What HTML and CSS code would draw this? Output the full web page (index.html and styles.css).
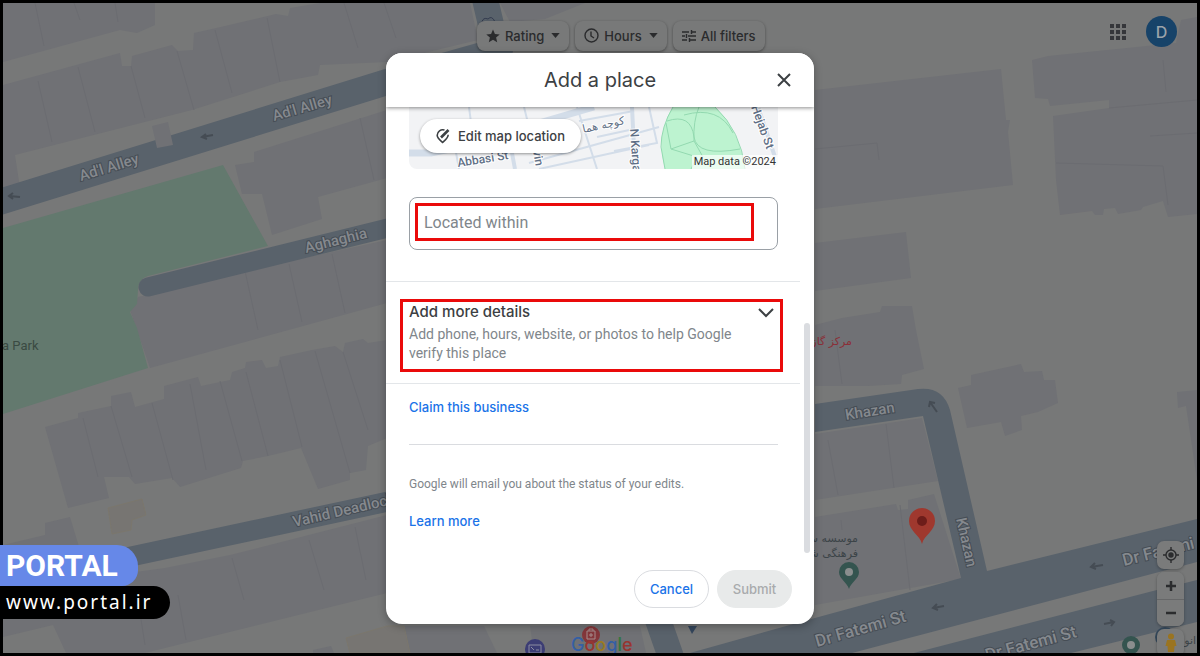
FILE: index.html
```html
<!DOCTYPE html>
<html lang="en">
<head>
    <meta charset="UTF-8">
    <meta name="viewport" content="width=device-width, initial-scale=1.0">
    <title>Add a place</title>
    <link rel="stylesheet" href="styles.css">
</head>
<body>
<div class="app">
    <svg class="map" viewBox="3 3 1194 650" preserveAspectRatio="xMidYMid slice" aria-hidden="true">
        <!-- buildings -->
        <g class="building">
            <path d="M3 3H155V25L137 33L120 30L3 62Z"/>
            <path d="M3 85L120 53L122 66H131L132 56L172 45L178 51L193 50L194 33L212 29L276 14L288 16L290 8L320 3H470L478 40L387 62L320 65L318 75L280 82L192 110L15 155L20 188L3 194Z"/>
            <path d="M235 165L254 162V152L387 110V178L318 197L322 219L272 235L262 194H242Z"/>
            <path d="M138 297L245 271L387 240V303L150 368L130 310Z"/>
            <path d="M45 427L78 418V413L111 406V396L131 392L135 407L164 399V386L198 377L201 386L230 380L232 372L245 368L246 362L262 360L266 368L278 366L280 357L312 350L335 346L343 352L345 343L363 339L368 343L387 340V438L368 446L366 470L350 473V480L318 489L301 448L268 456L243 461L241 468L180 487L172 478L135 484L129 477H104L109 498L68 508Z"/>
            <path d="M3 545L45 535V523L70 517L80 550V580H3Z"/>
            <path d="M3 590L165 568L230 555L387 515V593L145 653H66L53 625L3 637Z"/>
            <path d="M313 650L331 646L334 653H313Z"/>
            <path d="M404 626H484L497 653H410Z"/>
            <path d="M530 626H640L646 653H534Z"/>
            <path d="M500 3H585L545 19L510 22Z"/>
            <path d="M815 90L1001 69L1006 120H1010L1008 132L1013 185L815 209Z"/>
            <path d="M815 243L906 232L911 278L815 291Z"/>
            <path d="M815 325L842 318L880 312L882 306H912L916 330L924 369L902 375L901 384L868 386L815 386Z"/>
            <path d="M1032 60L1048 56L1176 43L1181 20L1197 17V214L1168 217L1163 201L1143 207L1141 210L1118 214L1115 208L1104 209L1103 215H1095L1092 211L1060 215L1056 180L1053 116L1109 108V100L1050 106L1048 99L1035 98Z"/>
            <path d="M958 388L971 385V375L1021 364L1024 372L1042 371L1044 380L1055 380L1058 403L1038 412L1021 416L1022 430L1005 436L1001 422L967 428Z"/>
            <path d="M1177 392L1197 390V480L1186 406L1178 408Z"/>
            <path d="M815 434L922 418L938 481L815 500Z"/>
            <path d="M815 517L896 504L898 510L908 509V500L934 494L961 579L815 605Z"/>
        </g>
        <g class="walls">
            <path d="M35 3L44 46M74 3L80 20M115 3L118 22M38 81L52 142M78 67L95 132M131 66L145 118M177 51L194 110M215 30L232 93M267 18L280 82M344 3L358 48M384 3L396 38"/>
            <path d="M245 271L258 330M289 264L302 322M332 254L345 313M360 118L374 180"/>
            <path d="M83 418L98 477M111 406L132 477M152 403L173 480M190 384L206 470M220 381L242 461M246 372L268 456M280 360L302 447M315 351L350 473M343 352L368 430"/>
            <path d="M232 558L244 600M309 540L324 590M355 527L366 580M138 600L145 645M178 595L186 640"/>
            <path d="M815 149L877 143L879 160M835 330L842 384M1056 163L1163 166L1168 205M1109 108L1197 100M1163 60L1166 92M1150 136L1197 133"/>
            <path d="M828 440L838 495M886 424L894 488M900 505L910 590M841 520L842 530"/>
        </g>
        <path class="shop" d="M108 508L142 499L146 515L132 520L131 530L112 534ZM346 638L387 626H404L410 653H350Z"/>

        <!-- park and streets -->
        <path class="park" d="M3 228L223 165L268 246L148 276Q138 279 138 290L137 304L130 312L137 328L148 368L3 414Z"/>
        <g class="street">
            <path class="w26" d="M-10 205L387 82L500 50M484 -5L497 50"/>
            <path class="w19" d="M148 287L400 225"/>
            <path class="w20" d="M110 561L400 499"/>
            <path class="w26" d="M658 620L672 660"/>
            <path class="solid" d="M815 404L918 389Q943 386 950 410L987 571L1197 519V562L852 653H690L815 618L961 578L923 416L815 432Z"/>
            <path class="solid" d="M910 654L1153 591L1197 580V622L1067 654Z"/>
        </g>
        <path class="building" d="M152 126L168 122L173 145L157 148Z"/>

        <!-- one-way arrows -->
        <g class="arrows">
            <path d="M202 137L213 135M206 134L202 137L207 139"/>
            <path d="M9 196L20 197M13 193L9 196L13 199"/>
            <path d="M937 412L930 402M929 407L930 402L935 403"/>
            <path d="M933 608L944 606M937 604L933 608L938 610"/>
            <path d="M1091 567L1103 565M1095 563L1091 567L1096 569"/>
            <path d="M1104 624L1114 622M1110 620L1114 622L1111 626"/>
        </g>
        <g class="names">
            <text transform="translate(81 181) rotate(-17)">Ad'l Alley</text>
            <text transform="translate(274 121) rotate(-16)">Ad'l Alley</text>
            <text transform="translate(306 253) rotate(-14)">Aghaghia</text>
            <text transform="translate(294 527) rotate(-13)">Vahid Deadlock</text>
            <text transform="translate(846 420) rotate(-9)">Khazan</text>
            <text transform="translate(956 519) rotate(77)">Khazan</text>
            <text class="big" transform="translate(817 647) rotate(-16)">Dr Fatemi St</text>
            <text class="big" transform="translate(987 661) rotate(-15)">Dr Fatemi St</text>
            <text class="big" transform="translate(1124 566) rotate(-14)">Dr Fatemi</text>
        </g>
        <text class="place" x="2" y="350">a Park</text>
        <text class="fa fa-red" x="852" y="345" direction="rtl">مرکز گاز</text>
        <text class="fa" x="858" y="542" direction="rtl">موسسه سینا</text>
        <text class="fa" x="858" y="557" direction="rtl">فرهنگی شهر</text>
        <text class="fa" x="1196" y="644" direction="rtl">انوار</text>

        <!-- pins -->
        <path fill="#9f382e" d="M922 544C920 535 909 531 909 521A13 13 0 0 1 935 521C935 531 924 535 922 544Z"/>
        <circle cx="922" cy="521" r="5" fill="#6d1d1a"/>
        <path fill="#34544f" d="M849 589C847 582 839 579 839 572A10 10 0 0 1 859 572C859 579 851 582 849 589Z"/>
        <circle cx="849" cy="572" r="4" fill="#8a8e8e"/>
        <circle cx="1131" cy="645" r="9" fill="#34544f"/>
        <circle cx="1131" cy="645" r="4" fill="#8a8e8e"/>
        <circle cx="1165" cy="637" r="10" fill="#35495c"/>
        <path fill="#34465c" d="M688 626H697L692 634Z"/>
        <circle cx="535" cy="649" r="10" fill="#3c3d74"/>
        <path fill="none" stroke="#8b8ca0" d="M529 645H541V653H529ZM531 647L534 650M536 650H539"/>
        <circle cx="591" cy="635" r="9" fill="#84363a"/>
        <path fill="none" stroke="#a58c8c" d="M587 631H595V639H587ZM589 635H593M591 633V637M589 631V629H593V631"/>
        <path fill="none" stroke="#323a4e" d="M482 22Q483 17 488 19Q492 15 495 22"/>
        <text class="google" x="571" y="651"><tspan fill="#345fa4">G</tspan><tspan fill="#983530">o</tspan><tspan fill="#9a7b22">o</tspan><tspan fill="#345fa4">g</tspan><tspan fill="#32773e">l</tspan><tspan fill="#983530">e</tspan></text>
    </svg>

    <div class="topbar">
        <button type="button" class="chip">
            <svg width="14" height="14" viewBox="0 0 24 24"><path fill="currentColor" d="M12 1l3.3 7.6 8.2.7-6.200 5.400 1.900 8.100L12 18.500l-7.200 4.300 1.900-8.100L.5 9.300l8.200-.7z"/></svg>
            Rating
            <svg class="caret" width="9" height="5" viewBox="0 0 10 6"><path fill="currentColor" d="M0 0H10L5 6Z"/></svg>
        </button>
        <button type="button" class="chip">
            <svg width="15" height="15" viewBox="0 0 15 15" fill="none" stroke="currentColor" stroke-width="1.400"><circle cx="7.500" cy="7.500" r="6.500"/><path d="M7 3.500V8L10 10"/></svg>
            Hours
            <svg class="caret" width="9" height="5" viewBox="0 0 10 6"><path fill="currentColor" d="M0 0H10L5 6Z"/></svg>
        </button>
        <button type="button" class="chip">
            <svg width="14" height="12" viewBox="0 0 14 12" fill="none" stroke="currentColor" stroke-width="1.400"><path d="M0 2H7M10 2H14M9.500 0V4M0 6H3M6 6H14M4.500 4V8M0 10H5M8 10H14M7.500 8V12"/></svg>
            All filters
        </button>
        <div class="account">
            <button type="button" class="apps" aria-label="Google apps">
                <svg width="16" height="16" viewBox="0 0 16 16" fill="currentColor"><path d="M0 0h4v4H0zM6 0h4v4H6zM12 0h4v4h-4zM0 6h4v4H0zM6 6h4v4H6zM12 6h4v4h-4zM0 12h4v4H0zM6 12h4v4H6zM12 12h4v4h-4z"/></svg>
            </button>
            <button type="button" class="avatar">D</button>
        </div>
    </div>

    <div class="dialog" role="dialog" aria-labelledby="dialogTitle">
        <div class="dialog-header">
            <h1 id="dialogTitle">Add a place</h1>
            <button type="button" class="close" aria-label="Close">
                <svg width="14" height="14" viewBox="0 0 14 14" fill="none" stroke="currentColor" stroke-width="2"><path d="M1 1L13 13M13 1L1 13"/></svg>
            </button>
        </div>

        <form class="dialog-body" id="placeForm">
            <div class="preview">
                <svg viewBox="0 0 369 62" preserveAspectRatio="xMidYMid slice" aria-hidden="true">
                    <rect width="369" height="62" fill="#f2f3f5"/>
                    <g fill="none" stroke="#d3dde9">
                        <path stroke-width="7" d="M0 46H22L60 38L130 16L185 0"/>
                        <path stroke-width="4" d="M223 0L226 62M103 46L106 62M349 0L366 50"/>
                        <path stroke-width="2" d="M60 0L66 46M115 0L120 20M168 0L188 62M46 40L50 62M120 56L250 20M130 62L240 38M170 14L225 4M188 30L225 22M240 0L248 36L205 44M290 0L310 30"/>
                    </g>
                    <path fill="#bdf3d0" d="M264 0H306Q330 22 336 62H256Q250 40 254 24Q258 8 264 0Z"/>
                    <path fill="none" stroke="#93d9b0" d="M264 0Q252 20 252 40L256 62M306 0Q332 24 336 62M258 14Q282 6 285 30Q288 50 331 42M290 0Q284 14 285 34L262 42L257 16M285 34L294 50M262 42L288 50L282 62M275 8Q310 -2 324 26"/>
                    <g class="preview-names">
                        <text transform="translate(49 60) rotate(-9)">Abbasi St</text>
                        <text transform="translate(124 44) rotate(80)">vin</text>
                        <text transform="translate(221 22) rotate(86)">N Kargar</text>
                        <text transform="translate(342 0) rotate(70)">Hejab St</text>
                        <text class="preview-fa" transform="translate(216 17) rotate(-12)" direction="rtl">کوچه هما</text>
                    </g>
                </svg>
                <button type="button" class="edit-map">
                    <svg width="14" height="16" viewBox="0 0 14 16" fill="none" stroke="currentColor" stroke-width="1.600"><path d="M8.500 2.100A5.500 5.500 0 0 0 1.200 7.300C1.200 10.200 4 12.200 6.600 14.500C9.200 12.200 12 10.200 12.200 6.800"/><path stroke-width="2.600" d="M5 9.500L12.500 2"/></svg>
                    Edit map location
                </button>
                <span class="copyright">Map data ©2024</span>
            </div>

            <div class="field">
                <input type="text" id="within" name="within" placeholder="Located within" aria-label="Located within">
            </div>

            <div class="more">
                <button type="button" class="more-btn" aria-expanded="false">
                    <span class="more-text">
                        <span class="more-title">Add more details</span>
                        <span class="more-hint">Add phone, hours, website, or photos to help Google verify this place</span>
                    </span>
                    <svg width="16" height="10" viewBox="0 0 16 10" fill="none" stroke="#3c4043" stroke-width="2"><path d="M1 1L8 8L15 1"/></svg>
                </button>
            </div>

            <div class="claim"><a href="#">Claim this business</a></div>

            <div class="notice">
                <p>Google will email you about the status of your edits.</p>
                <a href="#">Learn more</a>
            </div>
            <span class="scroll-thumb"></span>
        </form>

        <div class="dialog-footer">
            <button type="button" class="btn">Cancel</button>
            <button type="submit" form="placeForm" class="btn btn-submit" disabled>Submit</button>
        </div>
    </div>

    <div class="controls">
        <button type="button" aria-label="Your location">
            <svg width="16" height="16" viewBox="0 0 16 16" fill="none" stroke="currentColor" stroke-width="1.400"><circle cx="8" cy="8" r="5"/><circle cx="8" cy="8" r="2" fill="currentColor"/><path d="M8 0V3M8 13V16M0 8H3M13 8H16"/></svg>
        </button>
        <div class="zoom">
            <button type="button" aria-label="Zoom in">
                <svg width="10" height="10" viewBox="0 0 10 10" stroke="currentColor" stroke-width="2.500"><path d="M0 5H10M5 0V10"/></svg>
            </button>
            <button type="button" aria-label="Zoom out">
                <svg width="10" height="10" viewBox="0 0 10 10" stroke="currentColor" stroke-width="2.500"><path d="M0 5H10"/></svg>
            </button>
        </div>
        <button type="button" class="pegman" aria-label="Street View">
            <svg width="12" height="20" viewBox="0 0 12 20" fill="#9a7420"><circle cx="6" cy="3.500" r="3"/><path d="M2 7H10L11.500 13H9.500L9 19H3L2.500 13H.5Z"/></svg>
        </button>
    </div>
</div>

<div class="brand">
    <strong class="brand-name">PORTAL</strong>
    <span class="brand-url">www.portal.ir</span>
</div>
</body>
</html>
```
FILE: styles.css
```css
* {
  box-sizing: border-box;
}

body {
  position: relative;
  margin: 0;
  font-family: Inter, "Liberation Sans", sans-serif;
  color: #3c4043;
}

button {
  font: inherit;
  color: inherit;
  cursor: pointer;
}

svg {
  flex: none;
}

a {
  color: #1a73e8;
  font-size: 13px;
  font-weight: 500;
  line-height: 18px;
  text-decoration: none;
}

.app {
  position: relative;
  display: flex;
  flex-direction: column;
  min-height: 100vh;
  border: 3px solid #000;
  background-color: #777878;
  overflow: hidden;
}

/* map */
.map {
  position: absolute;
  top: 0;
  left: 0;
  width: 100%;
  height: 100%;
}

.building {
  fill: #707175;
}

.walls {
  fill: none;
  stroke: #6b6c71;
}

.shop {
  fill: #777572;
  stroke: #7b776d;
}

.park {
  fill: #63796e;
}

.street {
  fill: none;
  stroke: #59626b;
  stroke-linecap: round;
}

.street .solid {
  fill: #59626b;
  stroke: none;
}

.w26 {
  stroke-width: 26px;
}

.w19 {
  stroke-width: 19px;
}

.w20 {
  stroke-width: 20px;
}

.arrows {
  fill: none;
  stroke: #454c54;
  stroke-width: 2px;
}

.names text {
  font: 500 15px Roboto, sans-serif;
  fill: #85898e;
  stroke: #464d55;
  stroke-width: 2px;
  paint-order: stroke;
}

.names .big {
  font-size: 17px;
}

.place {
  font: 13px Roboto, sans-serif;
  fill: #3a4a42;
}

.fa {
  font: 11px "DejaVu Sans", sans-serif;
  fill: #3c4448;
}

.fa-red {
  fill: #8b2f38;
}

.google {
  font: 500 18px Inter, sans-serif;
}

/* top bar */
.topbar {
  position: relative;
  display: flex;
  align-items: center;
  gap: 6px;
  height: 50px;
  padding: 7px 20px 0 474px;
  color: #2a2b2d;
}

.chip {
  display: flex;
  align-items: center;
  gap: 5px;
  height: 30px;
  margin-top: 8px;
  padding: 0 9px;
  border: 0;
  border-radius: 8px;
  background-color: #787979;
  box-shadow: 0 1px 3px rgba(0, 0, 0, 0.4);
  font-size: 13px;
  font-weight: 500;
  white-space: nowrap;
}

.caret {
  margin-left: 2px;
}

.account {
  display: flex;
  align-items: center;
  gap: 20px;
  margin-left: auto;
}

.apps {
  display: flex;
  padding: 0;
  border: 0;
  background: none;
  color: #35363a;
}

.avatar {
  width: 31px;
  height: 31px;
  padding: 0;
  border: 0;
  border-radius: 50%;
  background-color: #174369;
  color: #9ba3aa;
  font-size: 16px;
  font-weight: 500;
}

/* dialog */
.dialog {
  position: relative;
  width: 428px;
  max-width: 100%;
  margin: 0 auto;
  border-radius: 16px;
  background-color: #fff;
  box-shadow: 0 2px 8px rgba(0, 0, 0, 0.3);
  overflow: hidden;
}

.dialog-header {
  position: relative;
  z-index: 1;
  display: flex;
  align-items: center;
  height: 54px;
  padding: 0 23px 0 37px;
  background-color: #fff;
  box-shadow: 0 1px 4px rgba(0, 0, 0, 0.45);
}

.dialog-header h1 {
  flex: 1;
  margin: 0;
  font-size: 20px;
  font-weight: 400;
  text-align: center;
}

.close {
  display: flex;
  padding: 0;
  border: 0;
  background: none;
}

.dialog-body {
  position: relative;
  padding-right: 14px;
}

.preview {
  position: relative;
  height: 62px;
  margin: 0 22px 28px 23px;
  border-radius: 0 0 8px 8px;
  overflow: hidden;
}

.preview > svg {
  display: block;
  width: 100%;
  height: 100%;
}

.preview-names text {
  font: 500 12px Roboto, sans-serif;
  fill: #5f6f86;
  stroke: #fff;
  stroke-width: 2px;
  paint-order: stroke;
}

.preview-names .preview-fa {
  font: 11px "DejaVu Sans", sans-serif;
}

.edit-map {
  position: absolute;
  top: 12px;
  left: 11px;
  display: flex;
  align-items: center;
  gap: 8px;
  height: 34px;
  padding: 0 16px;
  border: 0;
  border-radius: 17px;
  background-color: #fff;
  box-shadow: 0 1px 3px rgba(0, 0, 0, 0.4);
  font-size: 13px;
  font-weight: 500;
}

.copyright {
  position: absolute;
  right: 0;
  bottom: 0;
  padding: 0 2px;
  background-color: rgba(255, 255, 255, 0.7);
  color: #333;
  font: 11px/14px Roboto, sans-serif;
}

.field {
  display: flex;
  margin: 0 22px 31px 23px;
  padding: 5px 23px 8px 5px;
  border: 1px solid #9aa0a6;
  border-radius: 8px;
}

.field input {
  width: 100%;
  height: 38px;
  padding: 0 6px;
  border: 3px solid #ea0a0a;
  background: none;
  color: #3c4043;
  font: 16px Roboto, sans-serif;
}

.field input::placeholder {
  color: #80868b;
}

.more {
  padding: 17px 17px 11px 14px;
  border-top: 1px solid #e3e6e9;
  border-bottom: 1px solid #e3e6e9;
}

.more-btn {
  display: flex;
  align-items: flex-start;
  justify-content: space-between;
  width: 100%;
  padding: 0 6px;
  border: 3px solid #ea0a0a;
  background: none;
  text-align: left;
}

.more-btn svg {
  margin-top: 6px;
}

.more-text {
  padding-bottom: 6px;
}

.more-title,
.more-hint {
  display: block;
}

.more-title {
  margin-bottom: 3px;
  font-size: 15px;
  font-weight: 500;
  line-height: 20px;
}

.more-hint {
  max-width: 335px;
  color: #80868b;
  font: 14px/19px Roboto, sans-serif;
}

.claim {
  margin: 0 22px 0 23px;
  padding: 12px 0 28px;
  border-bottom: 1px solid #dadce0;
}

.notice {
  padding: 29px 22px 40px 23px;
}

.notice p {
  margin: 0 0 16px;
  color: #80868b;
  font: 12px/20px Roboto, sans-serif;
}

.scroll-thumb {
  position: absolute;
  top: 216px;
  right: 4px;
  width: 6px;
  height: 230px;
  border-radius: 3px;
  background-color: #dadce0;
}

.dialog-footer {
  display: flex;
  justify-content: flex-end;
  gap: 8px;
  padding: 0 22px 16px;
}

.btn {
  min-width: 75px;
  height: 38px;
  padding: 0 14px;
  border: 1px solid #dadce0;
  border-radius: 19px;
  background-color: #fff;
  color: #1a73e8;
  font-size: 13px;
  font-weight: 500;
}

.btn-submit {
  border-color: #e8eaea;
  background-color: #e8eaea;
  color: #a9abad;
}

/* map controls */
.controls {
  position: absolute;
  right: 13px;
  bottom: -4px;
  display: flex;
  flex-direction: column;
  gap: 3px;
  color: #2b2c2e;
}

.controls button {
  display: flex;
  align-items: center;
  justify-content: center;
  width: 27px;
  height: 28px;
  padding: 0;
  border: 0;
  border-radius: 7px;
  background-color: #7a7b7b;
  box-shadow: 0 1px 3px rgba(0, 0, 0, 0.3);
}

.zoom {
  border-radius: 7px;
  background-color: #7a7b7b;
  box-shadow: 0 1px 3px rgba(0, 0, 0, 0.3);
}

.controls .zoom button {
  height: 27px;
  box-shadow: none;
}

.controls .zoom button + button {
  border-top: 1px solid #666768;
  border-radius: 0 0 7px 7px;
}

/* site badge */
.brand {
  position: absolute;
  left: 0;
  bottom: 37px;
  display: flex;
  flex-direction: column;
  align-items: flex-start;
  color: #fff;
}

.brand-name {
  padding: 0 20px 0 6px;
  border-radius: 0 21px 16px 0;
  background-color: #6688e8;
  font: 700 30px/41px Roboto, sans-serif;
}

.brand-url {
  padding: 0 18px 0 6px;
  border-radius: 0 17px 17px 0;
  background-color: #000;
  font: 19px/33px "Noto Sans", sans-serif;
  letter-spacing: 2px;
}
```
